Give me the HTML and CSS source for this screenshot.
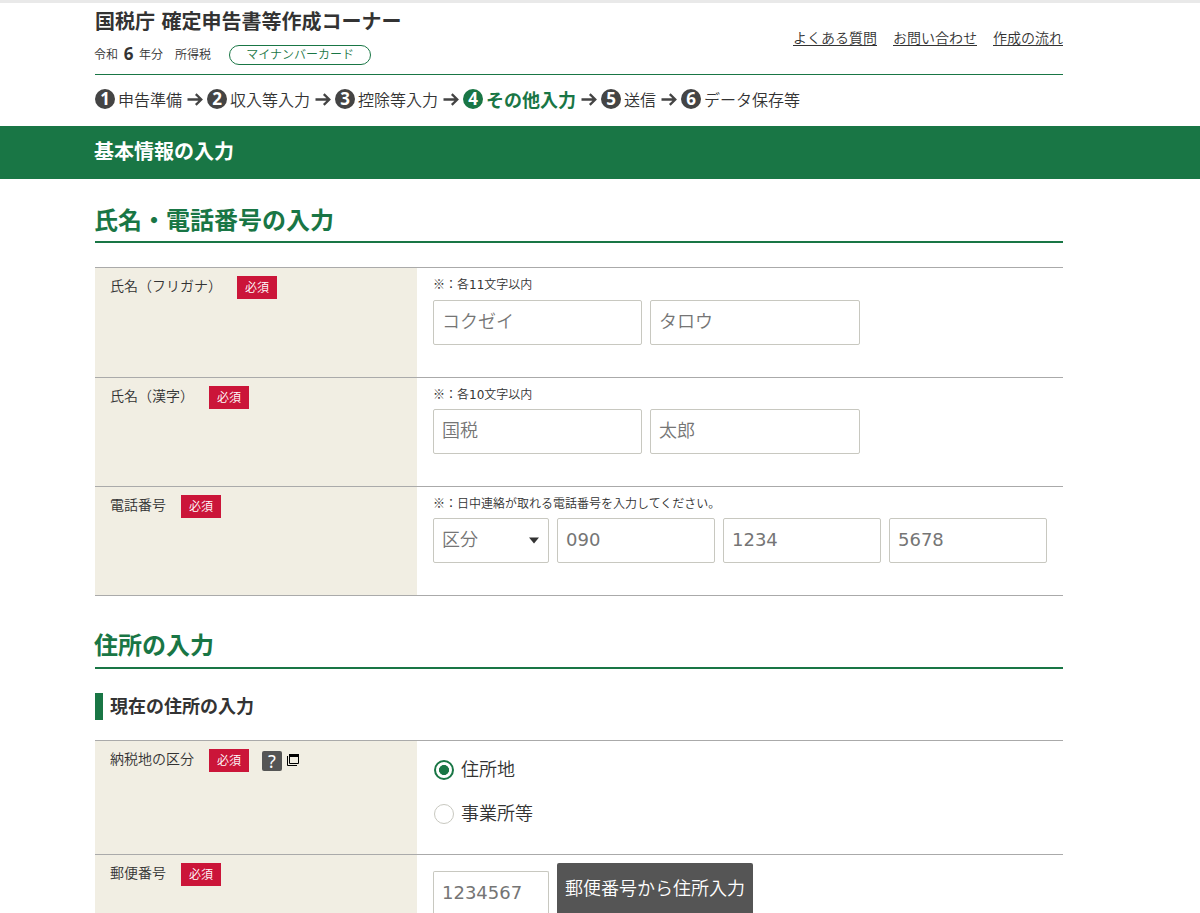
FILE: index.html
```html
<!DOCTYPE html>
<html lang="ja">
<head>
<meta charset="utf-8">
<title>国税庁 確定申告書等作成コーナー</title>
<link rel="stylesheet" href="styles.css">
</head>
<body>
<svg class="defs" width="0" height="0">
  <symbol id="arrow" viewBox="0 0 16 16"><path d="M0.5 8.5H14M8.8 3.1L14.3 8.5L8.8 13.9" fill="none" stroke="#444" stroke-width="2.3"/></symbol>
</svg>
<header class="header wrap">
  <div class="masthead">
    <div>
      <h1 class="site-title">国税庁 確定申告書等作成コーナー</h1>
      <div class="meta"><span>令和</span><b class="year">6</b><span>年分</span><span class="tax">所得税</span><span class="pill">マイナンバーカード</span></div>
    </div>
    <nav class="links"><a href="#">よくある質問</a><a href="#">お問い合わせ</a><a href="#">作成の流れ</a></nav>
  </div>
  <ol class="steps">
    <li><b class="num">1</b><span>申告準備</span><svg class="arrow"><use href="#arrow"/></svg></li>
    <li><b class="num">2</b><span>収入等入力</span><svg class="arrow"><use href="#arrow"/></svg></li>
    <li><b class="num">3</b><span>控除等入力</span><svg class="arrow"><use href="#arrow"/></svg></li>
    <li class="current"><b class="num">4</b><span>その他入力</span><svg class="arrow"><use href="#arrow"/></svg></li>
    <li><b class="num">5</b><span>送信</span><svg class="arrow"><use href="#arrow"/></svg></li>
    <li><b class="num">6</b><span>データ保存等</span></li>
  </ol>
</header>
<div class="band"><div class="wrap">基本情報の入力</div></div>
<main class="wrap">
  <h2 class="section-title">氏名・電話番号の入力</h2>
  <div class="form">
    <div class="row row-kana">
      <div class="label"><span>氏名（フリガナ）</span><span class="required">必須</span></div>
      <div class="field">
        <p class="note">※：各<span class="digits">11</span>文字以内</p>
        <div class="inputs"><input class="name" placeholder="コクゼイ"><input class="name name-given" placeholder="タロウ"></div>
      </div>
    </div>
    <div class="row">
      <div class="label"><span>氏名（漢字）</span><span class="required">必須</span></div>
      <div class="field">
        <p class="note">※：各<span class="digits">10</span>文字以内</p>
        <div class="inputs"><input class="name" placeholder="国税"><input class="name name-given" placeholder="太郎"></div>
      </div>
    </div>
    <div class="row row-last">
      <div class="label"><span>電話番号</span><span class="required">必須</span></div>
      <div class="field">
        <p class="note">※：日中連絡が取れる電話番号を入力してください。</p>
        <div class="inputs">
          <div class="select"><span>区分</span><svg width="10" height="7"><path d="M0 0.5H10L5 6.5Z" fill="#333"/></svg></div>
          <input class="tel" placeholder="090"><input class="tel" placeholder="1234"><input class="tel" placeholder="5678">
        </div>
      </div>
    </div>
  </div>
  <h2 class="section-title second">住所の入力</h2>
  <h3 class="sub-title">現在の住所の入力</h3>
  <div class="form">
    <div class="row row-radio">
      <div class="label"><span>納税地の区分</span><span class="required">必須</span><span class="help">?</span>
        <svg class="window" width="12" height="12"><path d="M0.5 2V11.5H10" fill="none" stroke="#000"/><path d="M2.5 0.5H11.5V9.5H2.5Z" fill="none" stroke="#000"/><path d="M2 0H12V3H2Z"/></svg>
      </div>
      <div class="field radios">
        <label class="choice"><span class="radio checked"></span><span class="choice-text">住所地</span></label>
        <label class="choice"><span class="radio"></span><span class="choice-text">事業所等</span></label>
      </div>
    </div>
    <div class="row row-zip">
      <div class="label"><span>郵便番号</span><span class="required">必須</span></div>
      <div class="field zip"><input class="code" placeholder="1234567"><button class="lookup">郵便番号から住所入力</button></div>
    </div>
  </div>
</main>
</body>
</html>
```
FILE: styles.css
```css
* { box-sizing: border-box; }
body {
  margin: 0;
  height: 913px;
  overflow: hidden;
  border-top: 3px solid #e9e9e9;
  background: #fff;
  color: #333;
  font-family: "Noto Sans CJK JP", sans-serif;
  font-size: 14px;
  font-weight: 350;
}
h1, h2, h3, p, ol { margin: 0; padding: 0; }
.defs { display: block; }
.wrap { width: 968px; margin-left: 95px; }
.header { height: 123px; }
.masthead {
  display: flex;
  justify-content: space-between;
  height: 72px;
  border-bottom: 1px solid #197645;
}
.site-title {
  padding-top: 4px;
  font-size: 20px;
  line-height: 28px;
  word-spacing: 2px;
}
.meta { display: flex; align-items: center; margin: 9px 0 0 -1px; height: 22px; font-size: 12px; line-height: 18px; }
.meta > span:not(.pill) { padding-bottom: 2px; }
.year { width: 21px; padding-bottom: 3px; text-align: center; font: bold 17px/20px "Noto Sans", sans-serif; }
.tax { margin-left: 12px; }
.pill {
  width: 142px;
  height: 20px;
  margin-left: 18px;
  border: 1px solid #197645;
  border-radius: 10px;
  color: #197645;
  line-height: 16px;
  text-align: center;
}
.links { display: flex; gap: 16px; padding-top: 24px; line-height: 20px; }
.links a { color: #333; text-underline-offset: 2px; }
.steps { display: flex; align-items: center; height: 48px; list-style: none; font-size: 16px; }
.steps li { display: flex; align-items: center; line-height: 24px; }
.num {
  width: 20px;
  height: 20px;
  margin-right: 3px;
  border-radius: 50%;
  background: #444;
  color: #fff;
  font: bold 17px/20px "Noto Sans", sans-serif;
  text-align: center;
}
.arrow { width: 16px; height: 16px; margin: 0 4px 0 5px; }
.current { color: #197645; font-size: 18px; font-weight: bold; }
.current .num { background: #197645; }
.band {
  height: 53px;
  background: #197645;
  color: #fff;
  font-size: 20px;
  font-weight: bold;
  line-height: 50px;
}
.band .wrap { text-indent: -1px; }
.section-title {
  height: 64px;
  padding-top: 24px;
  border-bottom: 2px solid #197645;
  color: #197645;
  font-size: 24px;
  line-height: 32px;
  text-indent: -1px;
}
.form { margin-top: 24px; border-top: 1px solid #aaa; }
.row { display: flex; height: 109px; border-bottom: 1px solid #aaa; }
.row-kana { height: 110px; }
.label { display: flex; align-items: flex-start; width: 322px; padding: 8px 15px; background: #f1eee3; line-height: 18px; }
.required {
  width: 40px;
  height: 23px;
  margin-left: 15px;
  background: #cb1539;
  color: #fff;
  font-size: 12px;
  line-height: 22px;
  text-align: center;
}
.field { flex: 1; padding: 7px 16px 0; }
.note { height: 24px; font-size: 12px; line-height: 18px; }
.row-kana .note { height: 25px; }
.digits { font-family: "DejaVu Sans", sans-serif; font-weight: 400; }
.inputs { display: flex; gap: 8px; }
input, .select {
  height: 45px;
  padding: 0 8px 5px;
  border: 1px solid #c8c8c0;
  border-radius: 2px;
  background: #fff;
  color: #757575;
  font: 350 18px "Noto Sans CJK JP", sans-serif;
}
input::placeholder { color: #757575; opacity: 1; }
.name { width: 209px; }
.name-given { width: 210px; }
.tel { width: 158px; }
.tel, .code { padding-bottom: 3px; font-family: "DejaVu Sans", sans-serif; font-weight: 400; }
.select { display: flex; align-items: center; justify-content: space-between; width: 116px; padding-right: 9px; }
.select svg { margin-top: 5px; }
.second { height: 73px; padding-top: 32px; }
.sub-title {
  height: 27px;
  margin-top: 24px;
  padding-left: 7px;
  border-left: 8px solid #197645;
  font-size: 18px;
  line-height: 24px;
}
.sub-title + .form { margin-top: 20px; }
.row-radio { height: 114px; }
.help {
  width: 20px;
  height: 20px;
  margin: 2px 5px 0 13px;
  border-radius: 2px;
  background: #555;
  color: #fff;
  font: 18px/20px "Noto Sans", sans-serif;
  text-align: center;
}
.window { margin-top: 5px; }
.radios { padding-top: 15px; }
.choice { display: flex; align-items: center; gap: 7px; height: 28px; margin-bottom: 16px; padding-left: 1px; font-size: 18px; line-height: 24px; }
.choice-text { padding-bottom: 4px; }
.radio { width: 20px; height: 20px; border: 1px solid #c8c8c0; border-radius: 50%; }
.checked { border: 2px solid #197645; background: radial-gradient(circle, #197645 4.7px, #fff 5.3px); }
.row-zip { height: 58px; border-bottom: 0; overflow: hidden; }
.zip { display: flex; align-items: flex-start; gap: 8px; padding-top: 8px; }
.code { width: 116px; height: 42px; margin-top: 8px; padding: 0 8px; border-bottom: 0; border-radius: 2px 2px 0 0; }
.lookup {
  width: 196px;
  height: 50px;
  padding: 0 0 3px;
  border: 0;
  border-radius: 2px 2px 0 0;
  background: #555;
  color: #fff;
  font: 350 18px "Noto Sans CJK JP", sans-serif;
}
```
